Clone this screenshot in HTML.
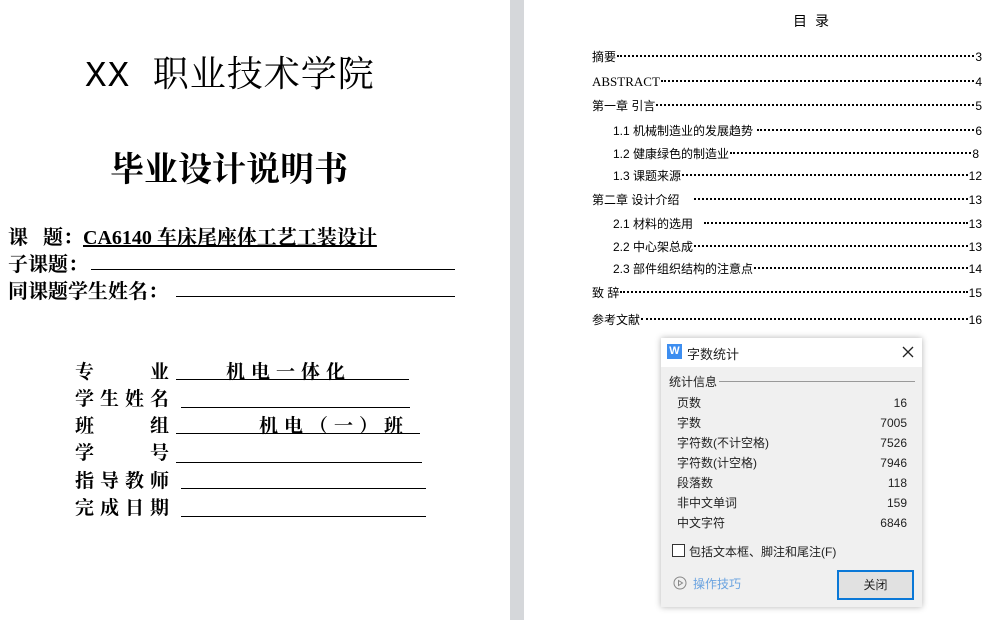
<html><head><style>
body{margin:0;width:994px;height:620px;position:relative;overflow:hidden;background:#fff;font-family:"Liberation Serif","Noto Serif CJK SC",serif;color:#000}
.a{position:absolute;white-space:nowrap}
.gap{position:absolute;left:510px;top:0;width:14px;height:620px;background:#d5d7da}
.ln{position:absolute;border-bottom:1.5px solid #000}
.f{font-size:19px;font-weight:bold;letter-spacing:6px;font-family:"Noto Serif CJK SC",serif}
.t{position:absolute;font-family:"Liberation Sans","Noto Sans CJK SC",sans-serif;font-size:12px;display:flex;align-items:baseline;width:390px;left:592px;line-height:16px}
.t .d{flex:1;border-bottom:2px dotted #000;margin:0 1px;position:relative;top:-4px}
.dlg{position:absolute;left:661px;top:338px;width:261px;height:269px;background:#f0f0f0;box-shadow:0 0 6px rgba(0,0,0,.3);font-family:"Liberation Sans","Noto Sans CJK SC",sans-serif;font-size:12px;color:#222}
.r{position:absolute;left:16px;width:230px;display:flex;align-items:baseline;justify-content:space-between;line-height:16px}
</style></head><body>
<div class="gap"></div>
<div class="a" style="left:85px;top:46px;font-size:36px;letter-spacing:1px;font-family:'Liberation Mono','Noto Serif CJK SC',serif">XX 职业技术学院</div>
<div class="a" style="left:110px;top:142px;font-size:34px;font-family:'Noto Serif CJK SC',serif;font-weight:bold">毕业设计说明书</div>
<div class="a" style="left:8px;top:221px;font-size:20px;font-weight:bold">课&nbsp;&nbsp;&nbsp;题：<span style="text-decoration:underline">CA6140 车床尾座体工艺工装设计</span></div>
<div class="a" style="left:8px;top:248px;font-size:20px;font-weight:bold">子课题：</div>
<div class="ln" style="left:91px;top:269px;width:364px"></div>
<div class="a" style="left:8px;top:275px;font-size:20px;font-weight:bold">同课题学生姓名：</div>
<div class="ln" style="left:176px;top:296px;width:279px"></div>
<div class="a f" style="left:75px;top:357px">专<span style="margin-left:50px">业</span></div><div class="ln" style="left:176px;top:379px;width:233px"></div><div class="a f" style="left:226px;top:357px">机电一体化</div>
<div class="a f" style="left:75px;top:384px">学生姓名</div><div class="ln" style="left:181px;top:407px;width:229px"></div>
<div class="a f" style="left:75px;top:411px">班<span style="margin-left:50px">组</span></div><div class="ln" style="left:176px;top:433px;width:244px"></div><div class="a f" style="left:259px;top:411px">机电（一）班</div>
<div class="a f" style="left:75px;top:438px">学<span style="margin-left:50px">号</span></div><div class="ln" style="left:176px;top:462px;width:246px"></div>
<div class="a f" style="left:75px;top:466px">指导教师</div><div class="ln" style="left:181px;top:488px;width:245px"></div>
<div class="a f" style="left:75px;top:493px">完成日期</div><div class="ln" style="left:181px;top:516px;width:245px"></div>

<div class="a" style="left:793px;top:11px;font-size:14px;font-family:'Liberation Sans','Noto Sans CJK SC',sans-serif;letter-spacing:8px">目录</div>
<div class="t" style="top:49px"><span>摘要</span><span class="d"></span><span>3</span></div>
<div class="t" style="top:74px"><span style="font-family:'Liberation Serif',serif;font-size:13px">ABSTRACT</span><span class="d"></span><span>4</span></div>
<div class="t" style="top:98px"><span>第一章 引言</span><span class="d"></span><span>5</span></div>
<div class="t" style="top:123px;left:613px;width:369px"><span>1.1 机械制造业的发展趋势&nbsp;</span><span class="d"></span><span>6</span></div>
<div class="t" style="top:146px;left:613px;width:366px"><span>1.2 健康绿色的制造业</span><span class="d"></span><span>8</span></div>
<div class="t" style="top:168px;left:613px;width:369px"><span>1.3 课题来源</span><span class="d"></span><span>12</span></div>
<div class="t" style="top:192px"><span>第二章 设计介绍&nbsp;&nbsp;&nbsp;&nbsp;</span><span class="d"></span><span>13</span></div>
<div class="t" style="top:216px;left:613px;width:369px"><span>2.1 材料的选用&nbsp;&nbsp;&nbsp;</span><span class="d"></span><span>13</span></div>
<div class="t" style="top:239px;left:613px;width:369px"><span>2.2 中心架总成</span><span class="d"></span><span>13</span></div>
<div class="t" style="top:261px;left:613px;width:369px"><span>2.3 部件组织结构的注意点</span><span class="d"></span><span>14</span></div>
<div class="t" style="top:285px"><span>致 辞</span><span class="d"></span><span>15</span></div>
<div class="t" style="top:312px"><span>参考文献</span><span class="d"></span><span>16</span></div>

<div class="dlg">
<div style="position:absolute;left:0;top:0;width:261px;height:29px;background:#fff"></div>
<div style="position:absolute;left:6px;top:6px;width:15px;height:15px;background:#3d8ef0;color:#fff;font-size:11px;text-align:center;line-height:15px;font-weight:bold">W</div>
<div class="a" style="left:26px;top:6px;font-size:13px">字数统计</div>
<svg style="position:absolute;left:241px;top:8px" width="12" height="12"><path d="M1 1L11 11M11 1L1 11" stroke="#222" stroke-width="1.3"/></svg>
<div class="a" style="left:8px;top:35px">统计信息</div>
<div style="position:absolute;left:58px;top:43px;width:196px;border-top:1px solid #999"></div>
<div class="r" style="top:57px"><span>页数</span><span>16</span></div>
<div class="r" style="top:77px"><span>字数</span><span>7005</span></div>
<div class="r" style="top:97px"><span>字符数(不计空格)</span><span>7526</span></div>
<div class="r" style="top:117px"><span>字符数(计空格)</span><span>7946</span></div>
<div class="r" style="top:137px"><span>段落数</span><span>118</span></div>
<div class="r" style="top:157px"><span>非中文单词</span><span>159</span></div>
<div class="r" style="top:177px"><span>中文字符</span><span>6846</span></div>
<div style="position:absolute;left:11px;top:206px;width:11px;height:11px;border:1px solid #333;background:#fff"></div>
<div class="a" style="left:28px;top:205px">包括文本框、脚注和尾注(F)</div>
<svg style="position:absolute;left:12px;top:238px" width="14" height="14"><circle cx="7" cy="7" r="6" fill="none" stroke="#888"/><path d="M5.5 4.5L9.5 7L5.5 9.5Z" fill="none" stroke="#888"/></svg>
<div class="a" style="left:32px;top:237px;color:#6aa3e0">操作技巧</div>
<div style="position:absolute;left:176px;top:232px;width:73px;height:26px;border:2px solid #0a78d7;background:#e1e1e1;text-align:center;line-height:26px">关闭</div>
</div>
</body></html>
